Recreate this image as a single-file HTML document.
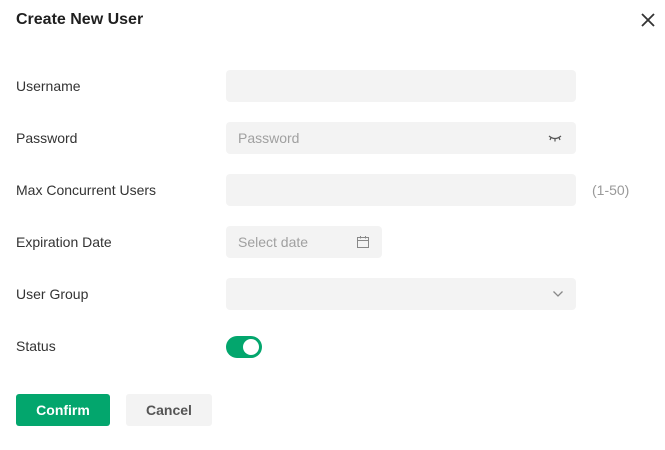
<!DOCTYPE html>
<html><head><style>
body{margin:0;width:665px;height:450px;background:#fff;font-family:"Liberation Sans",sans-serif;position:relative;overflow:hidden}
.a{position:absolute}
.t{left:16px;top:11px;font-size:16px;font-weight:bold;color:#1f1f1f}
.l{left:16px;font-size:14px;color:#333;line-height:32px}
.i{left:226px;width:350px;height:32px;background:#f3f3f3;border-radius:4px}
.ph{position:absolute;left:12px;top:0;line-height:32px;font-size:14px;color:#a0a0a0}
</style></head><body>
<div class="a t">Create New User</div>
<svg class="a" style="left:640px;top:12px" width="16" height="16" viewBox="0 0 16 16"><path d="M2 2L14 14M14 2L2 14" stroke="#333" stroke-width="1.8"/></svg>
<div class="a l" style="top:70px">Username</div>
<div class="a i" style="top:70px"></div>
<div class="a l" style="top:122px">Password</div>
<div class="a i" style="top:122px"><span class="ph">Password</span>
<svg class="a" style="left:322px;top:11px" width="14" height="10" viewBox="0 0 14 10"><path d="M1 3Q7 8 13 3M3 4.5L2 7M7 6L7 8.5M11 4.5L12 7" stroke="#555" stroke-width="1.2" fill="none"/></svg></div>
<div class="a l" style="top:174px">Max Concurrent Users</div>
<div class="a i" style="top:174px"></div>
<div class="a" style="left:592px;top:174px;line-height:32px;font-size:14px;color:#999">(1-50)</div>
<div class="a l" style="top:226px">Expiration Date</div>
<div class="a i" style="top:226px;width:156px"><span class="ph">Select date</span>
<svg class="a" style="left:130px;top:9px" width="14" height="14" viewBox="0 0 14 14"><rect x="1.5" y="2.5" width="11" height="10" fill="none" stroke="#888"/><path d="M1.5 5.5H12.5M4.5 1V3.5M9.5 1V3.5" stroke="#888"/></svg></div>
<div class="a l" style="top:278px">User Group</div>
<div class="a i" style="top:278px">
<svg class="a" style="left:326px;top:12px" width="12" height="8" viewBox="0 0 12 8"><path d="M1.5 1.5L6 6L10.5 1.5" stroke="#888" stroke-width="1.3" fill="none"/></svg></div>
<div class="a l" style="top:330px">Status</div>
<div class="a" style="left:226px;top:336px;width:36px;height:22px;border-radius:11px;background:#03a66d"><div class="a" style="left:17px;top:3px;width:16px;height:16px;border-radius:50%;background:#fff"></div></div>
<div class="a" style="left:16px;top:394px;width:94px;height:32px;background:#03a66d;border-radius:3px;color:#fff;font-weight:bold;font-size:14px;text-align:center;line-height:32px">Confirm</div>
<div class="a" style="left:126px;top:394px;width:86px;height:32px;background:#f3f3f3;border-radius:3px;color:#555;font-weight:bold;font-size:14px;text-align:center;line-height:32px">Cancel</div>
</body></html>
